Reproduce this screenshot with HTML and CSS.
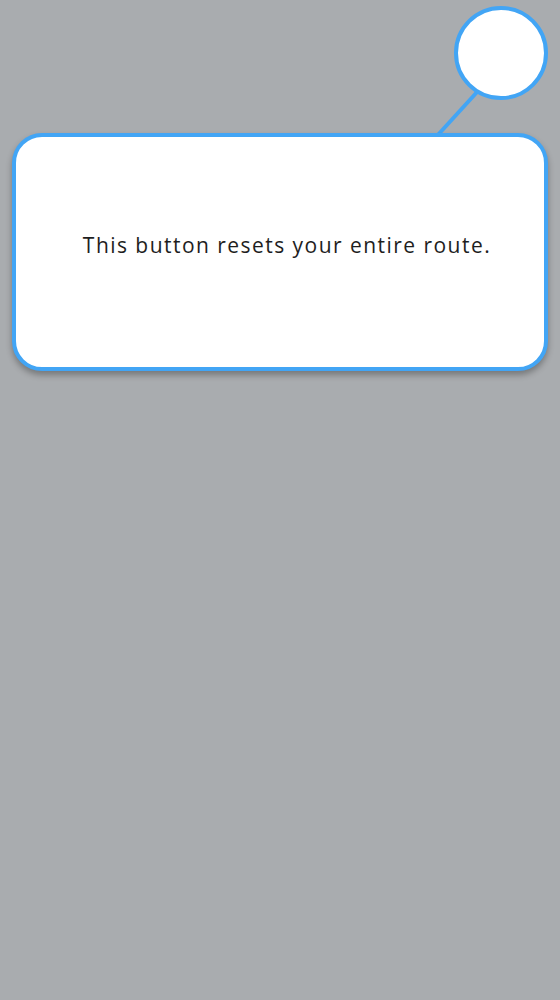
FILE: index.html
```html
<!DOCTYPE html>
<html>
<head>
<meta charset="utf-8">
<link rel="stylesheet" href="styles.css">
</head>
<body>
<div class="overlay">
  <svg class="connector" width="560" height="140" viewBox="0 0 560 140">
    <line x1="478" y1="91" x2="436" y2="137" stroke="#42a5f5" stroke-width="4"/>
  </svg>
  <div class="target"></div>
  <div class="card">
    <p class="msg">This button resets your entire route.</p>
  </div>
</div>
</body>
</html>
```
FILE: styles.css
```css
html, body {
  margin: 0;
  padding: 0;
}
body {
  background: #a9acaf;
  width: 560px;
  height: 1000px;
  font-family: "Open Sans", "Noto Sans", sans-serif;
}
.overlay {
  position: relative;
  padding: 133px 12px 0 12px;
}
.connector {
  position: absolute;
  left: 0;
  top: 0;
}
.target {
  position: absolute;
  left: 454px;
  top: 6px;
  width: 86px;
  height: 86px;
  border: 4px solid #42a5f5;
  border-radius: 50%;
  background: #fff;
}
.card {
  position: relative;
  height: 230px;
  border: 4px solid #42a5f5;
  border-radius: 30px;
  background: #fff;
  box-shadow: 0 4px 6px rgba(0,0,0,0.3);
  display: flex;
  align-items: center;
  justify-content: center;
}
.msg {
  margin: 0 0 14px 14px;
  font-size: 21px;
  letter-spacing: 1.46px;
  color: #1e1e1e;
}
```
